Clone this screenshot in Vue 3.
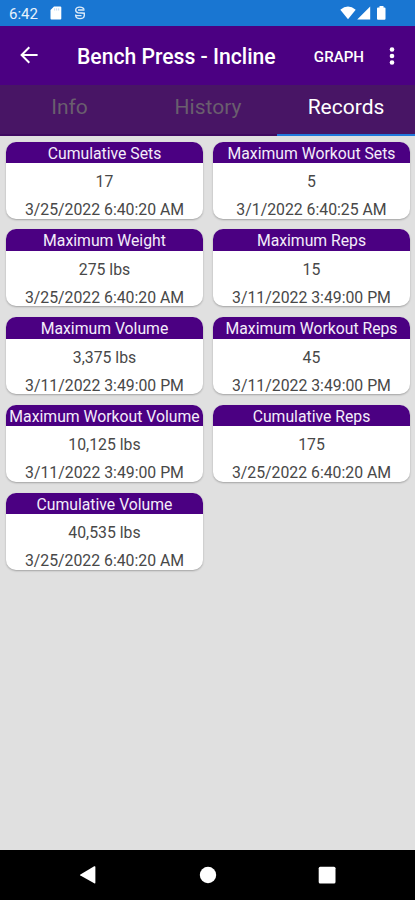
<script setup>
const tabs = [
  { name: 'Info', active: false },
  { name: 'History', active: false },
  { name: 'Records', active: true },
]

const records = [
  { title: 'Cumulative Sets', value: '17', date: '3/25/2022 6:40:20 AM' },
  { title: 'Maximum Workout Sets', value: '5', date: '3/1/2022 6:40:25 AM' },
  { title: 'Maximum Weight', value: '275 lbs', date: '3/25/2022 6:40:20 AM' },
  { title: 'Maximum Reps', value: '15', date: '3/11/2022 3:49:00 PM' },
  { title: 'Maximum Volume', value: '3,375 lbs', date: '3/11/2022 3:49:00 PM' },
  { title: 'Maximum Workout Reps', value: '45', date: '3/11/2022 3:49:00 PM' },
  { title: 'Maximum Workout Volume', value: '10,125 lbs', date: '3/11/2022 3:49:00 PM' },
  { title: 'Cumulative Reps', value: '175', date: '3/25/2022 6:40:20 AM' },
  { title: 'Cumulative Volume', value: '40,535 lbs', date: '3/25/2022 6:40:20 AM' },
]
</script>

<template>
  <div class="screen">
    <div class="status">
      <span class="clock">6:42</span>
      <svg class="sd" width="12" height="14" viewBox="0 0 12 14">
        <path d="M4 0.5H10.3Q11.3 .5 11.3 1.500V12.500Q11.300 13.500 10.300 13.500H1.500Q.5 13.500 .5 12.500V4Z" fill="#fff" />
        <path d="M4.700 2.300V4.500M6.700 2.300V4.500M8.700 2.300V4.500" stroke="#a9cbed" stroke-width=".8" />
      </svg>
      <svg class="sync" width="12" height="14" viewBox="0 0 12 14" fill="none" stroke="#dcebf9" stroke-width="1.400">
        <path d="M10 3.400C9 .4 2 .2 1.700 4.100C1.700 5.800 2.700 6.500 4 6.700L10.300 7.200V9.500C10 13.700 2 13.700 1.700 9.500V8.500" />
        <path d="M4 4H10.500M1.700 9.600H7.500" />
      </svg>
      <svg class="signals" width="48" height="14" viewBox="0 0 48 14" fill="#fff">
        <path d="M.3 3.700Q8 -2.800 15.700 3.700L8 13.300Z" />
        <path d="M30.200 .5V13.500H17.200Z" />
        <path d="M39.500 0h4v1.500h1q1 0 1 1V12.700q0 1 -1 1h-6.500q-1 0 -1 -1V2.500q0-1 1-1h1.500Z" />
      </svg>
    </div>

    <header class="appbar">
      <svg class="back" width="18" height="18" viewBox="0 0 18 18" fill="none" stroke="#fff" stroke-width="2">
        <path d="M17.600 9H2M9.300 1.200L1.600 9L9.300 16.800" />
      </svg>
      <h1>Bench Press - Incline</h1>
      <span class="action">GRAPH</span>
      <svg class="more" width="6" height="18" viewBox="0 0 6 18" fill="#fff">
        <circle cx="3" cy="2.500" r="2.300" /><circle cx="3" cy="9" r="2.300" /><circle cx="3" cy="15.500" r="2.300" />
      </svg>
    </header>

    <nav class="tabs">
      <div v-for="t in tabs" :key="t.name" class="tab" :class="{ active: t.active }"><span>{{ t.name }}</span></div>
    </nav>

    <main class="grid">
      <section v-for="r in records" :key="r.title" class="card">
        <h2>{{ r.title }}</h2>
        <p class="value">{{ r.value }}</p>
        <p class="date">{{ r.date }}</p>
      </section>
    </main>

    <footer class="navbar">
      <svg width="18" height="20" viewBox="0 0 18 20" fill="#fff"><path d="M15.200 1.300Q16.400 .8 16.400 2V17.500Q16.400 18.800 15.200 18.200L1.400 10.600Q.6 10 1.400 9.500Z" /></svg>
      <svg width="18" height="20" viewBox="0 0 18 20" fill="#fff"><circle cx="9" cy="10" r="8.200" /></svg>
      <svg width="18" height="20" viewBox="0 0 18 20" fill="#fff"><rect x=".7" y="1.800" width="16.800" height="16.800" rx="1.500" /></svg>
    </footer>
  </div>
</template>

<style>
body { margin: 0; }
</style>

<style scoped>
.screen {
  width: 415px;
  height: 900px;
  display: flex;
  flex-direction: column;
  overflow: hidden;
  background: #e0e0e0;
  font-family: Roboto, "Liberation Sans", sans-serif;
}
h1, h2, p { margin: 0; }
.status {
  height: 26px;
  box-sizing: border-box;
  padding: 0 27px 0 9px;
  display: flex;
  align-items: center;
  background: #1976d2;
}
.clock { width: 41px; padding-top: 2px; color: #e8f2fc; font-size: 15px; line-height: 24px; }
.sync { margin-left: 12px; }
.signals { margin-left: auto; }
.appbar {
  height: 59px;
  box-sizing: border-box;
  padding: 0 20px;
  display: flex;
  align-items: center;
  background: #4b0082;
  color: #fff;
}
.back { margin-top: -1px; }
h1 { margin: 3px 0 0 39px; font-size: 21.15px; line-height: 30px; font-weight: 500; white-space: nowrap; }
.action { margin: 2px 0 0 auto; font-size: 15.1px; font-weight: 500; }
.more { margin: 0 0 0 25px; }
.tabs {
  height: 51px;
  display: grid;
  grid-template-columns: 139px 138px 138px;
  background: #481565;
}
.tab {
  box-sizing: border-box;
  height: 51px;
  border-bottom: 2px solid #3f0a61;
  text-align: center;
  color: #6a5e6e;
  font-size: 21px;
  line-height: 45px;
}
.tab.active { color: #fff; border-color: #2179dc; }
.grid {
  flex: 1;
  padding: 5.5px 5px 0 6px;
  display: grid;
  grid-template-columns: 197px 197px;
  grid-auto-rows: 77px;
  gap: 10.8px 10px;
  align-content: start;
}
.card {
  overflow: hidden;
  border-radius: 10px;
  background: #fff;
  box-shadow: 0 1px 2px rgba(0, 0, 0, .28);
  text-align: center;
  white-space: nowrap;
  color: #484848;
  font-size: 15.8px;
}
h2 {
  height: 21.500px;
  background: #4b0082;
  color: #f4edfa;
  font-size: 15.75px;
  line-height: 24px;
  font-weight: 400;
}
.value { height: 28px; line-height: 37px; }
.date { height: 27px; line-height: 37px; }
.navbar {
  height: 50px;
  box-sizing: border-box;
  padding: 0 79px;
  display: flex;
  align-items: center;
  justify-content: space-between;
  background: #000;
}
</style>
